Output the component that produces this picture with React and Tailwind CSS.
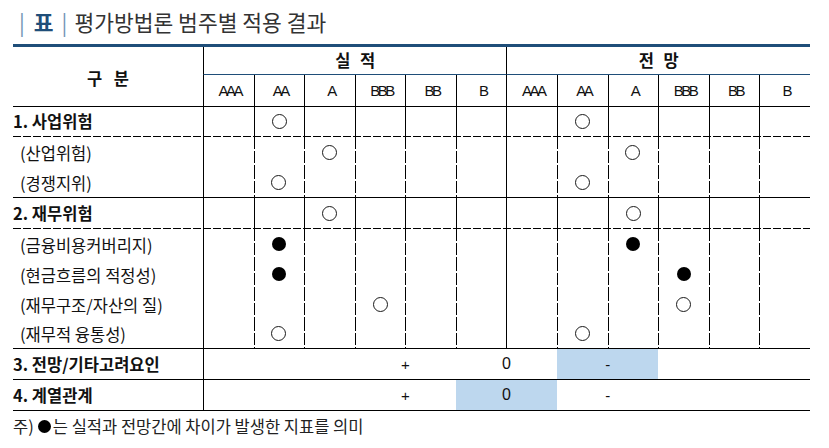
const RATINGS = ["AAA", "AA", "A", "BBB", "BB", "B"];

const marks = (pairs) => {
  const row = Array(12).fill("");
  Object.entries(pairs).forEach(([k, v]) => (row[k] = v));
  return row;
};

const DASH_V =
  "bg-[image:repeating-linear-gradient(to_bottom,#000_0_12px,transparent_12px_14px)] bg-no-repeat bg-[length:1px_100%] bg-left";

function Mark({ type }) {
  if (type === "o") return <span className="block h-[15px] w-[15px] rounded-full border border-[#1a1a1a]" />;
  if (type === "f") return <span className="block h-[14px] w-[14px] rounded-full bg-black" />;
  return null;
}

function Line({ dashed }) {
  if (dashed)
    return (
      <div className="h-px bg-[image:repeating-linear-gradient(to_right,#000_0_8px,transparent_8px_10px)]" />
    );
  return <div className="h-px bg-black" />;
}

function Row({ label, sub, data, h = "h-[30px]", dashed }) {
  return (
    <div className={`grid grid-cols-[190px_repeat(12,minmax(0,1fr))] ${h}`}>
      <div
        className={`flex items-center text-[16.5px] text-[#111] ${
          sub ? "pl-[7px] pt-[2px]" : "font-bold"
        }`}
      >
        {label}
      </div>
      {data.map((m, i) => {
        const solid = i === 0 || i === 6 || !dashed;
        return (
          <div
            key={i}
            className={`flex items-center justify-center ${solid ? "border-l border-black" : DASH_V}`}
          >
            <Mark type={m} />
          </div>
        );
      })}
    </div>
  );
}

function FactorRow({ label, blue }) {
  return (
    <div className="grid h-[30px] grid-cols-[190px_repeat(12,minmax(0,1fr))] text-[#111]">
      <div className="flex items-center text-[16.5px] font-bold">{label}</div>
      <div className="col-span-3 border-l border-black" />
      <div className="col-span-2 flex items-center justify-center font-['Liberation_Sans'] text-[15px]">+</div>
      <div
        className={`col-span-2 flex items-center justify-center font-['Liberation_Sans'] text-[16px] ${
          blue === "0" ? "bg-[#bdd7ee]" : ""
        }`}
      >
        0
      </div>
      <div
        className={`col-span-2 flex items-center justify-center font-['Liberation_Sans'] text-[15px] ${
          blue === "-" ? "bg-[#bdd7ee]" : ""
        }`}
      >
        -
      </div>
      <div className="col-span-3" />
    </div>
  );
}

export default function App() {
  return (
    <div className="h-[448px] w-[829px] overflow-hidden bg-white font-['Noto_Sans_CJK_KR',sans-serif] leading-none">
      <div className="flex h-[44px] items-center pb-[1px] pl-[19px] text-[21.5px]">
        <span className="text-[#6f93b5]">|</span>
        <span className="ml-[9px] font-bold text-[#1f4e79]">표</span>
        <span className="ml-[8px] text-[#6f93b5]">|</span>
        <span className="ml-[7px] text-[#333]">평가방법론 범주별 적용 결과</span>
      </div>

      <div className="ml-[13px] w-[797px]">
        <div className="h-[3px] bg-[#1f4e79]" />

        <div className="grid grid-cols-[190px_repeat(12,minmax(0,1fr))] grid-rows-[28px_31px] text-[#111]">
          <div className="row-span-2 flex items-center justify-center pt-[3px] text-[16.5px] font-bold [word-spacing:8px]">
            구 분
          </div>
          <div className="col-span-6 flex items-center justify-center border-b border-l border-b-[#1f4e79] border-l-black text-[16.5px] font-bold [word-spacing:6px]">
            실 적
          </div>
          <div className="col-span-6 flex items-center justify-center border-b border-l border-b-[#1f4e79] border-l-black text-[16.5px] font-bold [word-spacing:6px]">
            전 망
          </div>
          {[...RATINGS, ...RATINGS].map((r, i) => (
            <div
              key={i}
              className="flex items-center justify-center border-l border-black pl-[2px] font-['Liberation_Sans'] text-[15px] tracking-[-2.5px]"
            >
              {r}
            </div>
          ))}
        </div>
        <Line />

        <Row label="1. 사업위험" data={marks({ 1: "o", 7: "o" })} h="h-[29px]" />
        <Line dashed />
        <Row label="(산업위험)" sub dashed data={marks({ 2: "o", 8: "o" })} />
        <Row label="(경쟁지위)" sub dashed data={marks({ 1: "o", 7: "o" })} />
        <Line />

        <Row label="2. 재무위험" data={marks({ 2: "o", 8: "o" })} />
        <Line dashed />
        <Row label="(금융비용커버리지)" sub dashed data={marks({ 1: "f", 8: "f" })} />
        <Row label="(현금흐름의 적정성)" sub dashed data={marks({ 1: "f", 9: "f" })} />
        <Row label="(재무구조/자산의 질)" sub dashed data={marks({ 3: "o", 9: "o" })} />
        <Row label="(재무적 융통성)" sub dashed data={marks({ 1: "o", 7: "o" })} h="h-[29px]" />
        <Line />

        <FactorRow label="3. 전망/기타고려요인" blue="-" />
        <Line />
        <FactorRow label="4. 계열관계" blue="0" />
        <Line />

        <div className="flex h-[31px] items-center text-[16.5px] text-[#222]">
          <span>주)</span>
          <span className="ml-[4px] mr-[2px] inline-block h-[13px] w-[13px] rounded-full bg-black" />
          <span>는 실적과 전망간에 차이가 발생한 지표를 의미</span>
        </div>
      </div>
    </div>
  );
}
